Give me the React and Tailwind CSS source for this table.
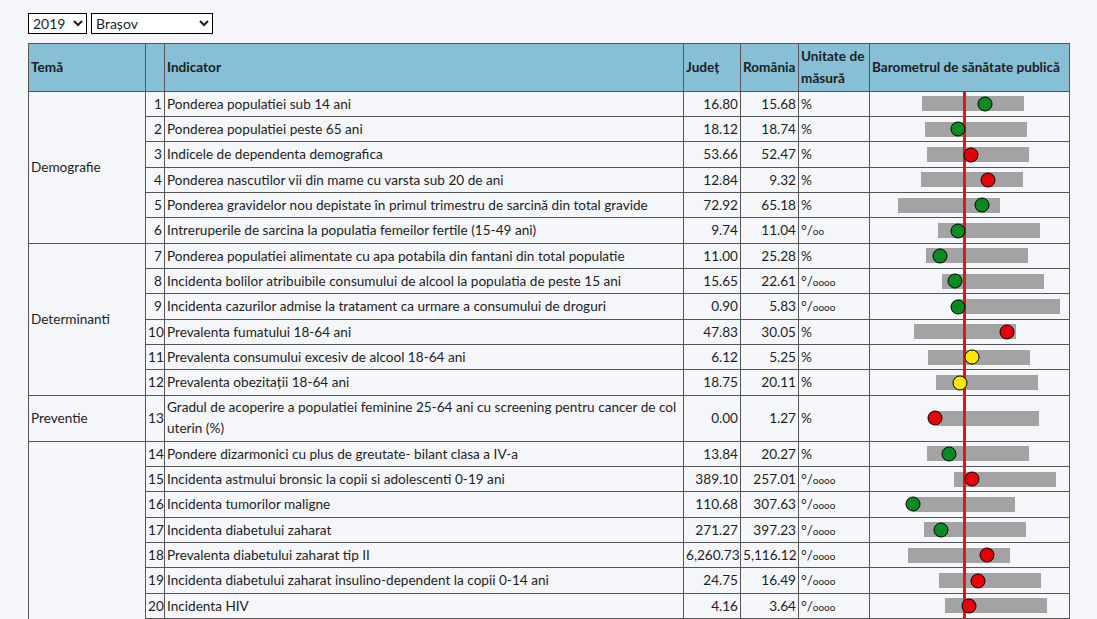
import React from 'react';

const rows = [
  { n: 1, t: 'Ponderea populatiei sub 14 ani', j: '16.80', r: '15.68', u: 'p', bar: 50, dot: 115, c: 'g' },
  { n: 2, t: 'Ponderea populatiei peste 65 ani', j: '18.12', r: '18.74', u: 'p', bar: 53, dot: 88, c: 'g' },
  { n: 3, t: 'Indicele de dependenta demografica', j: '53.66', r: '52.47', u: 'p', bar: 55, dot: 101, c: 'r' },
  { n: 4, t: 'Ponderea nascutilor vii din mame cu varsta sub 20 de ani', j: '12.84', r: '9.32', u: 'p', bar: 49, dot: 118, c: 'r' },
  { n: 5, t: 'Ponderea gravidelor nou depistate în primul trimestru de sarcină din total gravide', j: '72.92', r: '65.18', u: 'p', bar: 26, dot: 112, c: 'g' },
  { n: 6, t: 'Intreruperile de sarcina la populatia femeilor fertile (15-49 ani)', j: '9.74', r: '11.04', u: 'oo', bar: 66, dot: 88, c: 'g' },
  { n: 7, t: 'Ponderea populatiei alimentate cu apa potabila din fantani din total populatie', j: '11.00', r: '25.28', u: 'p', bar: 54, dot: 70, c: 'g' },
  { n: 8, t: 'Incidenta bolilor atribuibile consumului de alcool la populatia de peste 15 ani', j: '15.65', r: '22.61', u: 'oooo', bar: 70, dot: 85, c: 'g' },
  { n: 9, t: 'Incidenta cazurilor admise la tratament ca urmare a consumului de droguri', j: '0.90', r: '5.83', u: 'oooo', bar: 86, dot: 88, c: 'g' },
  { n: 10, t: 'Prevalenta fumatului 18-64 ani', j: '47.83', r: '30.05', u: 'p', bar: 42, dot: 137, c: 'r' },
  { n: 11, t: 'Prevalenta consumului excesiv de alcool 18-64 ani', j: '6.12', r: '5.25', u: 'p', bar: 56, dot: 102, c: 'y' },
  { n: 12, t: 'Prevalenta obezitații 18-64 ani', j: '18.75', r: '20.11', u: 'p', bar: 64, dot: 90, c: 'y' },
  { n: 13, t: 'Gradul de acoperire a populatiei feminine 25-64 ani cu screening pentru cancer de col', t2: 'uterin (%)', j: '0.00', r: '1.27', u: 'p', bar: 65, dot: 65, c: 'r' },
  { n: 14, t: 'Pondere dizarmonici cu plus de greutate- bilant clasa a IV-a', j: '13.84', r: '20.27', u: 'p', bar: 55, dot: 79, c: 'g' },
  { n: 15, t: 'Incidenta astmului bronsic la copii si adolescenti 0-19 ani', j: '389.10', r: '257.01', u: 'oooo', bar: 82, dot: 102, c: 'r' },
  { n: 16, t: 'Incidenta tumorilor maligne', j: '110.68', r: '307.63', u: 'oooo', bar: 41, dot: 43, c: 'g' },
  { n: 17, t: 'Incidenta diabetului zaharat', j: '271.27', r: '397.23', u: 'oooo', bar: 52, dot: 71, c: 'g' },
  { n: 18, t: 'Prevalenta diabetului zaharat tip II', j: '6,260.73', r: '5,116.12', u: 'oooo', bar: 36, dot: 117, c: 'r' },
  { n: 19, t: 'Incidenta diabetului zaharat insulino-dependent la copii 0-14 ani', j: '24.75', r: '16.49', u: 'oooo', bar: 67, dot: 108, c: 'r' },
  { n: 20, t: 'Incidenta HIV', j: '4.16', r: '3.64', u: 'oooo', bar: 73, dot: 99, c: 'r' },
  { n: 21, t: 'Incidenta tuberculozei', j: '41.20', r: '52.08', u: 'oooo', bar: 50, dot: 70, c: 'g' },
  { n: 22, t: 'Incidenta hepatitei virale', j: '3.11', r: '2.90', u: 'oooo', bar: 60, dot: 98, c: 'y' },
  { n: 23, t: 'Incidenta bolilor cardiovasculare', j: '812.40', r: '901.35', u: 'oooo', bar: 52, dot: 76, c: 'g' },
  { n: 24, t: 'Mortalitatea infantila', j: '5.40', r: '5.82', u: 'oo', bar: 55, dot: 82, c: 'g' },
  { n: 25, t: 'Mortalitatea generala', j: '11.62', r: '13.40', u: 'oo', bar: 58, dot: 74, c: 'g' },
  { n: 26, t: 'Mortalitatea prin boli ale aparatului circulator', j: '612.30', r: '790.12', u: 'oooo', bar: 47, dot: 60, c: 'g' },
  { n: 27, t: 'Mortalitatea prin tumori maligne', j: '240.55', r: '262.18', u: 'oooo', bar: 56, dot: 80, c: 'g' },
  { n: 28, t: 'Speranta de viata la nastere', j: '76.30', r: '75.60', u: 'ani', bar: 62, dot: 96, c: 'y' },
];

const groups = [
  { name: 'Demografie', from: 1, to: 6 },
  { name: 'Determinanti', from: 7, to: 12 },
  { name: 'Preventie', from: 13, to: 13 },
  { name: 'Stare de sanatate', from: 14, to: 28 },
];

const dotColor = {
  g: 'bg-[#0b8a22]',
  r: 'bg-[#e8000b]',
  y: 'bg-[#ffe800]',
};

function Unit({ u }) {
  if (u === 'p') return <span>%</span>;
  if (u === 'ani') return <span>ani</span>;
  return (
    <span>
      °/<span className="text-[10px] leading-none">{u}</span>
    </span>
  );
}

const td = 'border border-[#555] px-[2px] py-px align-middle';

export default function App() {
  return (
    <div className="min-h-screen bg-[#f4f6f9] pl-[28px] pt-[13px] text-[13.6px] text-[#1e1e1e]" style={{ fontFamily: 'Lato, "Noto Sans", sans-serif' }}>
      <div className="flex gap-[4px]">
        <select className="h-[21px] w-[59px] border border-black bg-white text-[14px] leading-none">
          <option>2019</option>
        </select>
        <select className="h-[21px] w-[122px] border border-black bg-white text-[14px] leading-none">
          <option>Brașov</option>
        </select>
      </div>

      <table className="mt-[9px] w-[1041px] table-fixed border-collapse leading-[22.35px]">
        <colgroup>
          <col className="w-[117px]" />
          <col className="w-[19px]" />
          <col className="w-[519px]" />
          <col className="w-[57px]" />
          <col className="w-[58px]" />
          <col className="w-[71px]" />
          <col className="w-[200px]" />
        </colgroup>
        <thead>
          <tr className="h-[47px] bg-[#86bfd6] text-left font-bold">
            <th className={td}>Temă</th>
            <th className={td}></th>
            <th className={td}>Indicator</th>
            <th className={td}>Județ</th>
            <th className={td}>România</th>
            <th className={td}>Unitate de măsură</th>
            <th className={td + ' whitespace-nowrap'}>Barometrul de sănătate publică</th>
          </tr>
        </thead>
        <tbody>
          {rows.map((row) => {
            const g = groups.find((x) => x.from === row.n);
            return (
              <tr key={row.n} className={row.t2 ? 'leading-[21.4px]' : ''}>
                {g && (
                  <td className={td} rowSpan={g.to - g.from + 1}>
                    {g.name}
                  </td>
                )}
                <td className={td + ' text-right'}>{row.n}</td>
                <td className={td + ' whitespace-nowrap overflow-hidden'}>
                  {row.t}
                  {row.t2 && (
                    <>
                      <br />
                      {row.t2}
                    </>
                  )}
                </td>
                <td className={td + ' text-right whitespace-nowrap'}>{row.j}</td>
                <td className={td + ' text-right whitespace-nowrap'}>{row.r}</td>
                <td className={td}>
                  <Unit u={row.u} />
                </td>
                <td className={td + ' relative p-0'}>
                  <div className="relative h-[15px]">
                    <div className="absolute top-0 h-[15px] w-[102px] bg-[#a3a3a3]" style={{ left: row.bar }} />
                  </div>
                  <div className="absolute bottom-[-1px] left-[93px] top-[-1px] z-10 w-[3px] bg-[#e31414]" />
                  <div
                    className={'absolute top-1/2 z-20 h-[15px] w-[15px] -translate-x-1/2 -translate-y-1/2 rounded-full border border-black ' + dotColor[row.c]}
                    style={{ left: row.dot }}
                  />
                </td>
              </tr>
            );
          })}
        </tbody>
      </table>
    </div>
  );
}
